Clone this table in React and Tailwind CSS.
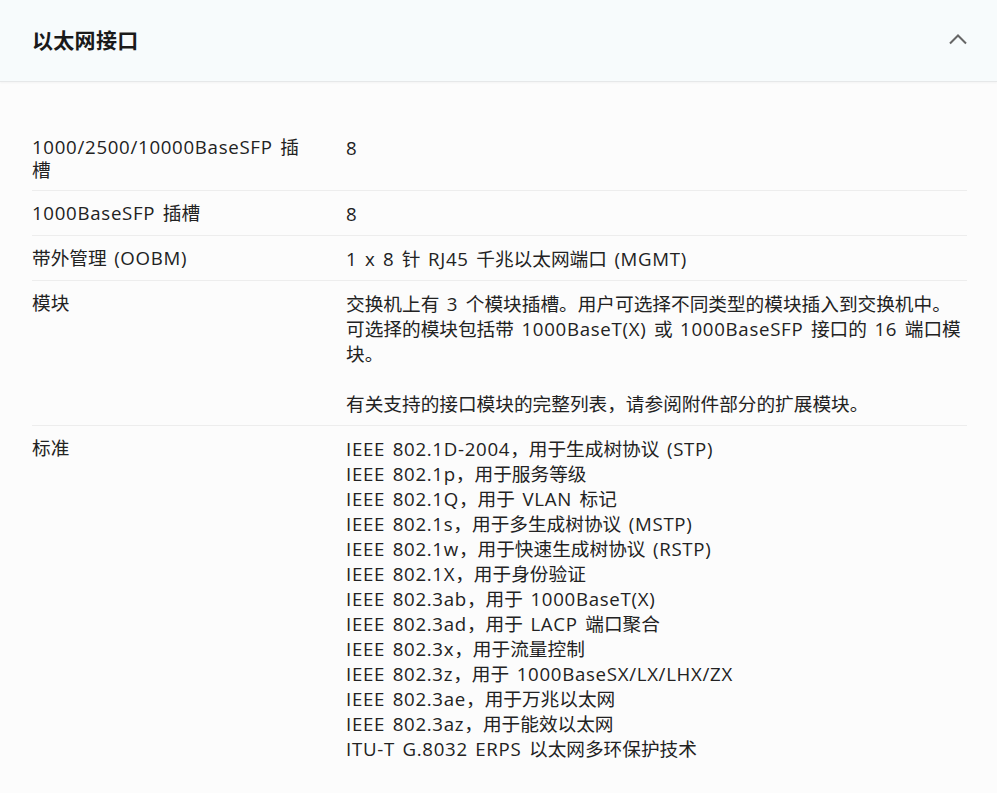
import React from "react";

const font = { fontFamily: '"Open Sans", "Noto Sans CJK SC", sans-serif' };

function T({ children }) {
  const parts = String(children).split(/([\u0020-\u024F]+)/);
  return (
    <>
      {parts.map((p, i) =>
        p === "" ? null : /^[\u0020-\u024F]+$/.test(p) ? (
          <span key={i} className="tracking-[0.7px]">{p}</span>
        ) : (
          <span key={i}>{p}</span>
        )
      )}
    </>
  );
}

const standards = [
  "IEEE 802.1D-2004，用于生成树协议 (STP)",
  "IEEE 802.1p，用于服务等级",
  "IEEE 802.1Q，用于 VLAN 标记",
  "IEEE 802.1s，用于多生成树协议 (MSTP)",
  "IEEE 802.1w，用于快速生成树协议 (RSTP)",
  "IEEE 802.1X，用于身份验证",
  "IEEE 802.3ab，用于 1000BaseT(X)",
  "IEEE 802.3ad，用于 LACP 端口聚合",
  "IEEE 802.3x，用于流量控制",
  "IEEE 802.3z，用于 1000BaseSX/LX/LHX/ZX",
  "IEEE 802.3ae，用于万兆以太网",
  "IEEE 802.3az，用于能效以太网",
  "ITU-T G.8032 ERPS 以太网多环保护技术",
];

function Row({ label, children, last }) {
  return (
    <div className={"flex pt-[10px] pb-[9px] " + (last ? "" : "border-b border-[#ededed]")}>
      <div className="w-[272px] mr-[42px] shrink-0 leading-[23px]">
        <T>{label}</T>
      </div>
      <div className="flex-1 leading-[25px]">{children}</div>
    </div>
  );
}

function Line({ text }) {
  return (
    <div className="whitespace-nowrap">
      <T>{text}</T>
    </div>
  );
}

export default function App() {
  return (
    <div className="w-[997px] min-h-[793px] bg-[#fcfcfc] text-[18.67px] text-[#222222] [word-spacing:2px]" style={font}>
      <div className="h-[82px] flex items-center justify-between pl-[32px] pr-[30px] bg-[#f7fbfc] border-b border-[#e6e8e9] shadow-[0_1px_2px_rgba(0,0,0,0.04)]">
        <div className="text-[21px] font-bold text-[#1a1a1a] tracking-[0.3px]">以太网接口</div>
        <svg width="18" height="11" viewBox="0 0 18 11" className="mt-[-2px]">
          <polyline points="1,9.5 9,1.5 17,9.5" fill="none" stroke="#666" strokeWidth="2" />
        </svg>
      </div>
      <div className="pl-[32px] pr-[30px] pt-[43px] pb-[24px]">
        <Row label="1000/2500/10000BaseSFP 插槽">
          <Line text="8" />
        </Row>
        <Row label="1000BaseSFP 插槽">
          <Line text="8" />
        </Row>
        <Row label="带外管理 (OOBM)">
          <Line text="1 x 8 针 RJ45 千兆以太网端口 (MGMT)" />
        </Row>
        <Row label="模块">
          <Line text="交换机上有 3 个模块插槽。用户可选择不同类型的模块插入到交换机中。" />
          <Line text="可选择的模块包括带 1000BaseT(X) 或 1000BaseSFP 接口的 16 端口模" />
          <Line text="块。" />
          <div className="h-[25px]"></div>
          <Line text="有关支持的接口模块的完整列表，请参阅附件部分的扩展模块。" />
        </Row>
        <Row label="标准" last>
          {standards.map((s) => (
            <Line key={s} text={s} />
          ))}
        </Row>
      </div>
    </div>
  );
}
